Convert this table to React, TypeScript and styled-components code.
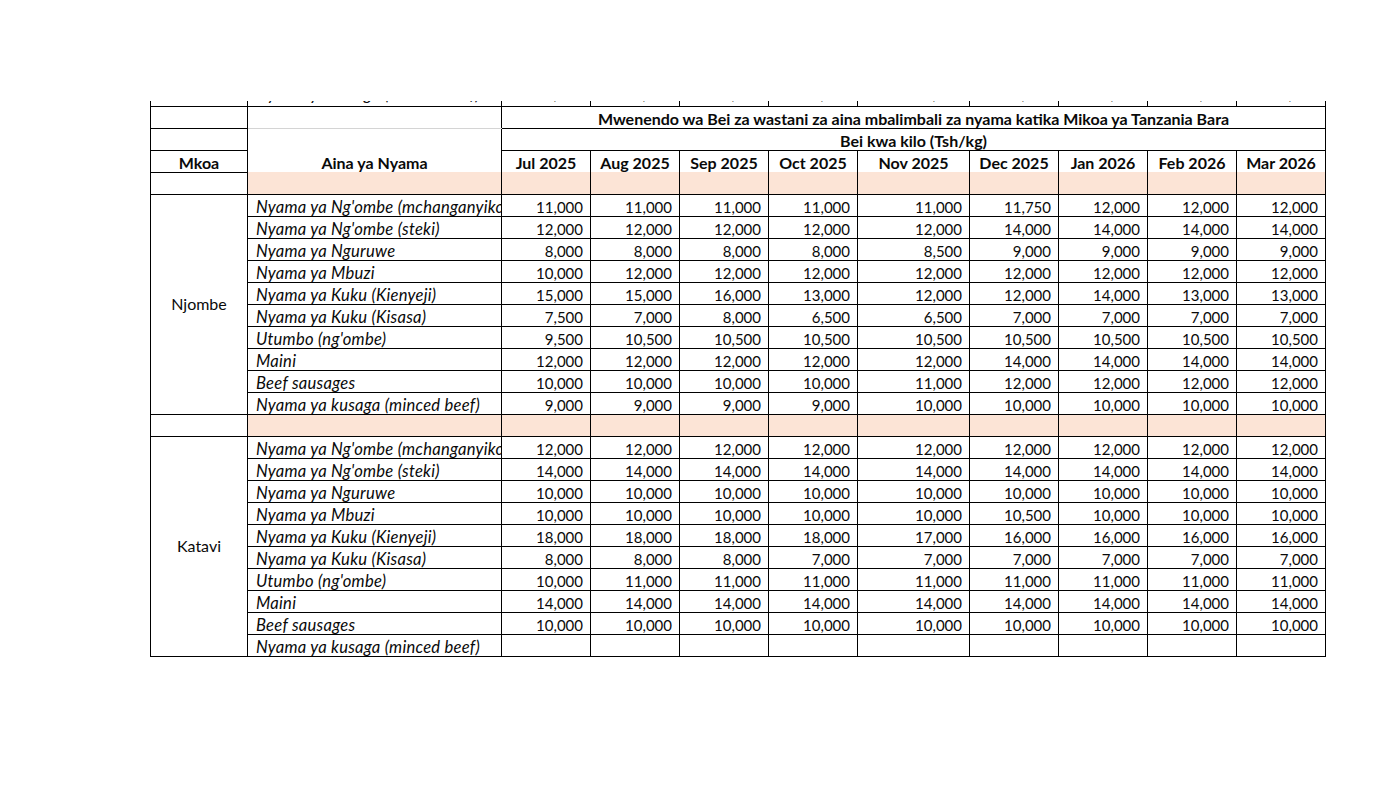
import React from "react";
import styled, { createGlobalStyle, css } from "styled-components";

const GlobalStyle = createGlobalStyle`
  html, body { margin: 0; padding: 0; background: #ffffff; }
  body { font-family: Lato, "Noto Sans", sans-serif; color: #000; }
`;

const Page = styled.div`
  width: 1399px;
  height: 787px;
  padding: 101px 0 0 150px;
  box-sizing: border-box;
  background: #fff;
`;

const Clip = styled.div`
  overflow: hidden;
  width: 1180px;
  display: flow-root;
`;

const Sheet = styled.table`
  border-collapse: collapse;
  table-layout: fixed;
  width: 1176px;
  margin-top: -17px;
  font-family: Lato, "Noto Sans", sans-serif;
  font-size: 16px;
  color: #0a0a0a;
`;

const Row = styled.tr`
  height: 22px;
`;

type Edge = "solid" | "grey" | "none";

const edge = (e: Edge) =>
  e === "solid" ? "1px solid #000" : e === "grey" ? "1px solid #d4d4d4" : "none";

const Cell = styled.td<{
  $t?: Edge;
  $b?: Edge;
  $l?: Edge;
  $r?: Edge;
  $align?: "left" | "right" | "center";
  $bold?: boolean;
  $italic?: boolean;
  $num?: boolean;
  $fill?: boolean;
  $middle?: boolean;
}>`
  padding: 0 8px 0 8px;
  height: 21px;
  line-height: 18px;
  box-sizing: border-box;
  white-space: nowrap;
  overflow: hidden;
  vertical-align: ${(p) => (p.$middle ? "middle" : "bottom")};
  text-align: ${(p) => p.$align ?? "left"};
  font-weight: ${(p) => (p.$bold ? 700 : 400)};
  font-style: ${(p) => (p.$italic ? "italic" : "normal")};
  font-size: ${(p) => (p.$num ? "15px" : p.$italic ? "16.6px" : "16px")};
  letter-spacing: ${(p) => (p.$italic ? "0.25px" : "normal")};
  background: ${(p) => (p.$fill ? "#fce4d6" : "#ffffff")};
  border-top: ${(p) => edge(p.$t ?? "solid")};
  border-bottom: ${(p) => edge(p.$b ?? "solid")};
  border-left: ${(p) => edge(p.$l ?? "solid")};
  border-right: ${(p) => edge(p.$r ?? "solid")};
  ${(p) =>
    p.$align === "right" &&
    css`
      padding-right: 7px;
    `}
`;

const GhostText = styled.span`
  display: inline-block;
  transform: translateY(-3px);
`;

const months = [
  "Jul 2025",
  "Aug 2025",
  "Sep 2025",
  "Oct 2025",
  "Nov 2025",
  "Dec 2025",
  "Jan 2026",
  "Feb 2026",
  "Mar 2026",
];

const widths = [97, 254, 89, 89, 89, 89, 112, 89, 89, 89, 89];

type Item = { name: string; values: (string | null)[] };

const rep = (v: string, n: number) => Array.from({ length: n }, () => v);

const njombe: Item[] = [
  { name: "Nyama ya Ng'ombe (mchanganyiko)", values: [...rep("11,000", 5), "11,750", ...rep("12,000", 3)] },
  { name: "Nyama ya Ng'ombe (steki)", values: [...rep("12,000", 5), ...rep("14,000", 4)] },
  { name: "Nyama ya Nguruwe", values: [...rep("8,000", 4), "8,500", ...rep("9,000", 4)] },
  { name: "Nyama ya Mbuzi", values: ["10,000", ...rep("12,000", 8)] },
  { name: "Nyama ya Kuku (Kienyeji)", values: ["15,000", "15,000", "16,000", "13,000", "12,000", "12,000", "14,000", "13,000", "13,000"] },
  { name: "Nyama ya Kuku (Kisasa)", values: ["7,500", "7,000", "8,000", "6,500", "6,500", "7,000", "7,000", "7,000", "7,000"] },
  { name: "Utumbo (ng'ombe)", values: ["9,500", ...rep("10,500", 8)] },
  { name: "Maini", values: [...rep("12,000", 5), ...rep("14,000", 4)] },
  { name: "Beef sausages", values: [...rep("10,000", 4), "11,000", ...rep("12,000", 4)] },
  { name: "Nyama ya kusaga (minced beef)", values: [...rep("9,000", 4), ...rep("10,000", 5)] },
];

const katavi: Item[] = [
  { name: "Nyama ya Ng'ombe (mchanganyiko)", values: rep("12,000", 9) },
  { name: "Nyama ya Ng'ombe (steki)", values: rep("14,000", 9) },
  { name: "Nyama ya Nguruwe", values: rep("10,000", 9) },
  { name: "Nyama ya Mbuzi", values: [...rep("10,000", 5), "10,500", ...rep("10,000", 3)] },
  { name: "Nyama ya Kuku (Kienyeji)", values: [...rep("18,000", 4), "17,000", ...rep("16,000", 4)] },
  { name: "Nyama ya Kuku (Kisasa)", values: [...rep("8,000", 3), ...rep("7,000", 6)] },
  { name: "Utumbo (ng'ombe)", values: ["10,000", ...rep("11,000", 8)] },
  { name: "Maini", values: rep("14,000", 9) },
  { name: "Beef sausages", values: rep("10,000", 9) },
  { name: "Nyama ya kusaga (minced beef)", values: rep(null, 9) },
];

const ghost: Item = {
  name: "Nyama ya kusaga (minced beef)",
  values: ["9,000", "9,000", "9,000", "9,000", "10,000", "10,000", "10,000", "10,000", "10,000"],
};

const BlankRow = () => (
  <Row>
    <Cell />
    {Array.from({ length: 10 }, (_, i) => (
      <Cell key={i} $fill $t="none" />
    ))}
  </Row>
);

const Region: React.FC<{ name: string; items: Item[] }> = ({ name, items }) => (
  <>
    {items.map((it, idx) => (
      <Row key={it.name + idx}>
        {idx === 0 && (
          <Cell rowSpan={items.length} $align="center" $middle>
            {name}
          </Cell>
        )}
        <Cell $italic>{it.name}</Cell>
        {it.values.map((v, i) => (
          <Cell key={i} $align="right" $num>
            {v ?? ""}
          </Cell>
        ))}
      </Row>
    ))}
  </>
);

export default function App() {
  return (
    <Page>
      <GlobalStyle />
      <Clip>
        <Sheet>
          <colgroup>
            {widths.map((w, i) => (
              <col key={i} style={{ width: w }} />
            ))}
          </colgroup>
          <tbody>
            <Row>
              <Cell $t="none" />
              <Cell $t="none" $italic>
                <GhostText>{ghost.name}</GhostText>
              </Cell>
              {ghost.values.map((v, i) => (
                <Cell key={i} $t="none" $align="right" $num>
                  <GhostText>{v}</GhostText>
                </Cell>
              ))}
            </Row>
            <Row>
              <Cell />
              <Cell $b="grey" />
              <Cell colSpan={9} $bold $align="center">
                Mwenendo wa Bei za wastani za aina mbalimbali za nyama katika Mikoa ya Tanzania Bara
              </Cell>
            </Row>
            <Row>
              <Cell />
              <Cell $t="grey" $b="none" />
              <Cell colSpan={9} $bold $align="center">
                Bei kwa kilo (Tsh/kg)
              </Cell>
            </Row>
            <Row>
              <Cell $bold $align="center">
                Mkoa
              </Cell>
              <Cell $t="none" $b="none" $bold $align="center">
                Aina ya Nyama
              </Cell>
              {months.map((m) => (
                <Cell key={m} $b="none" $bold $align="center">
                  {m}
                </Cell>
              ))}
            </Row>
            <BlankRow />
            <Region name="Njombe" items={njombe} />
            <BlankRow />
            <Region name="Katavi" items={katavi} />
          </tbody>
        </Sheet>
      </Clip>
    </Page>
  );
}
